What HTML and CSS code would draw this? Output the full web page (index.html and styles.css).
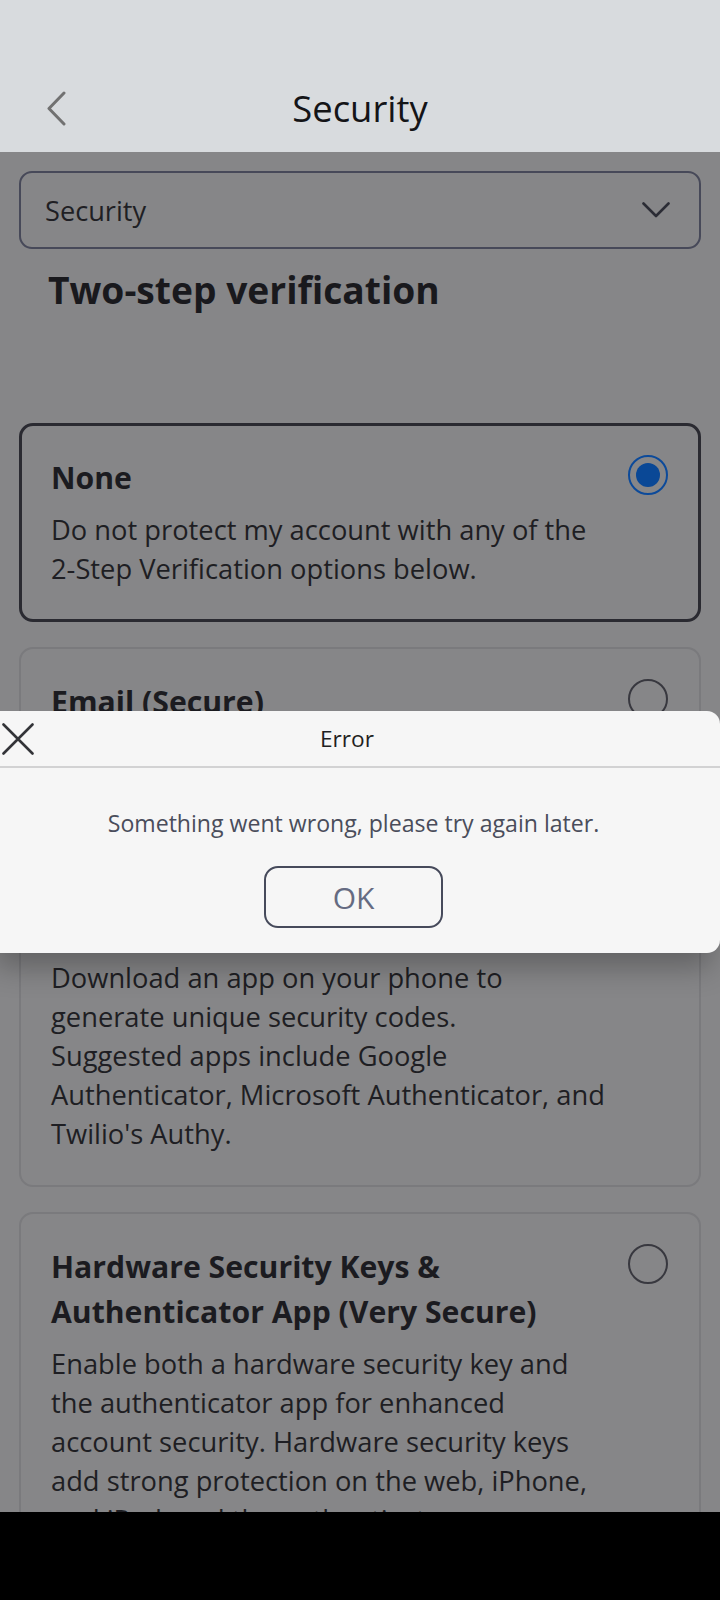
FILE: index.html
```
<!DOCTYPE html>
<html lang="en">
<head>
<meta charset="utf-8">
<title>Security</title>
<link rel="stylesheet" href="styles.css">
</head>
<body>
<div class="screen">
  <header class="topbar">
    <div class="topbar-row">
      <span class="back" aria-label="Back">
        <svg width="20" height="35" viewBox="0 0 20 35"><polyline points="18,2 3,17.5 18,33" fill="none" stroke="#717171" stroke-width="3" stroke-linecap="round" stroke-linejoin="round"/></svg>
      </span>
      <h1 class="title">Security</h1>
      <span></span>
    </div>
  </header>

  <main class="content">
    <div class="select">
      <span class="select-label">Security</span>
      <svg width="28" height="16" viewBox="0 0 28 16"><polyline points="1.5,1.5 14,14 26.5,1.5" fill="none" stroke="#2b2c35" stroke-width="2.6" stroke-linecap="round" stroke-linejoin="round"/></svg>
    </div>

    <h2 class="section-title">Two-step verification</h2>

    <div class="options">
      <div class="card selected">
        <div class="card-text">
          <div class="card-title">None</div>
          <p class="card-desc">Do not protect my account with any of the<br>2-Step Verification options below.</p>
        </div>
        <span class="radio on"></span>
      </div>

      <div class="card">
        <div class="card-text">
          <div class="card-title">Email (Secure)</div>
          <p class="card-desc">Receive a verification code by email<br>each time you sign in.</p>
        </div>
        <span class="radio"></span>
      </div>

      <div class="card">
        <div class="card-text">
          <div class="card-title">Authenticator App (Secure)</div>
          <p class="card-desc">Download an app on your phone to<br>generate unique security codes.<br>Suggested apps include Google<br>Authenticator, Microsoft Authenticator, and<br>Twilio's Authy.</p>
        </div>
        <span class="radio"></span>
      </div>

      <div class="card">
        <div class="card-text">
          <div class="card-title">Hardware Security Keys &amp;<br>Authenticator App (Very Secure)</div>
          <p class="card-desc">Enable both a hardware security key and<br>the authenticator app for enhanced<br>account security. Hardware security keys<br>add strong protection on the web, iPhone,<br>and iPad, and the authenticator app on<br>your Android devices.</p>
        </div>
        <span class="radio"></span>
      </div>
    </div>
  </main>

  <div class="navbar"></div>

  <div class="dialog" role="dialog">
    <div class="dialog-head">
      <span class="close" aria-label="Close">
        <svg width="32" height="32" viewBox="0 0 32 32"><path d="M1.5 1.5 L30.5 30.5 M30.5 1.5 L1.5 30.5" fill="none" stroke="#333438" stroke-width="2.6" stroke-linecap="round"/></svg>
      </span>
      <div class="dialog-title">Error</div>
    </div>
    <div class="dialog-body">
      <p class="dialog-msg">Something went wrong, please try again later.</p>
      <button class="ok-btn">OK</button>
    </div>
  </div>
</div>
</body>
</html>
```

FILE: styles.css
```
* { box-sizing: border-box; }

html, body {
  margin: 0;
  padding: 0;
  background: #000;
}

body {
  font-family: "Open Sans", "Noto Sans", "Liberation Sans", sans-serif;
  color: #1d1d22;
}

.screen {
  position: relative;
  width: 720px;
  height: 1600px;
  overflow: hidden;
  display: flex;
  flex-direction: column;
}

/* ---------- top bar ---------- */
.topbar {
  height: 152px;
  flex: none;
  background: #d8dbde;
  padding-top: 84px;
}

.topbar-row {
  height: 48px;
  display: grid;
  grid-template-columns: 1fr auto 1fr;
  align-items: center;
}

.back {
  display: flex;
  padding-left: 46px;
}

.title {
  margin: 0;
  font-size: 36.4px;
  font-weight: 400;
  line-height: 48px;
  color: #141417;
}

/* ---------- content ---------- */
.content {
  flex: 1;
  min-height: 0;
  overflow: hidden;
  background: #868688;
  padding: 19px 19px 0;
}

.select {
  height: 78px;
  border: 2px solid #474959;
  border-radius: 13px;
  display: flex;
  align-items: center;
  justify-content: space-between;
  padding: 0 29px 0 24px;
}

.select-label {
  font-size: 27.2px;
  color: #1f1f24;
}

.section-title {
  margin: 15px 0 0 29px;
  font-size: 37.2px;
  font-weight: 700;
  line-height: 51px;
  color: #19191d;
}

.options {
  margin-top: 108px;
  display: flex;
  flex-direction: column;
  gap: 25px;
}

.card {
  border: 2px solid #7a7a7d;
  border-radius: 14px;
  padding: 30px 31px 32px 30px;
  display: flex;
  align-items: flex-start;
  justify-content: space-between;
}

.card.selected {
  border: 3px solid #2a2a31;
  padding: 29px 30px 31px 29px;
}

.card-title {
  font-size: 30.2px;
  font-weight: 700;
  line-height: 45px;
  color: #1b1b20;
}

.card-desc {
  margin: 10px 0 0;
  font-size: 27.3px;
  line-height: 39px;
  color: #1e1e23;
  white-space: nowrap;
}

.radio {
  flex: none;
  width: 40px;
  height: 40px;
  border-radius: 50%;
  border: 2px solid #38383f;
  display: flex;
  align-items: center;
  justify-content: center;
}

.radio.on {
  border-color: #0c4a9a;
}

.radio.on::after {
  content: "";
  width: 24px;
  height: 24px;
  border-radius: 50%;
  background: #0a4896;
}

/* ---------- bottom nav bar ---------- */
.navbar {
  height: 88px;
  flex: none;
  background: #000;
}

/* ---------- dialog ---------- */
.dialog {
  position: absolute;
  top: 711px;
  left: -13px;
  width: 733px;
  height: 242px;
  background: #f6f6f6;
  border-radius: 13px;
  box-shadow: 0 22px 30px -8px rgba(0, 0, 0, 0.28);
}

.dialog-head {
  height: 57px;
  border-bottom: 2px solid #d2d2d3;
  display: flex;
  align-items: center;
  position: relative;
}

.close {
  display: flex;
  padding-left: 15px;
}

.dialog-title {
  position: absolute;
  left: 0;
  right: 13px;
  text-align: center;
  font-size: 22.7px;
  color: #1f1f22;
}

.dialog-body {
  display: flex;
  flex-direction: column;
  align-items: center;
  padding-top: 40px;
}

.dialog-msg {
  margin: 0;
  font-size: 23.1px;
  line-height: 31px;
  color: #4a4d5b;
}

.ok-btn {
  margin-top: 27px;
  width: 179px;
  height: 62px;
  border: 2px solid #464a5b;
  border-radius: 14px;
  background: transparent;
  font-family: inherit;
  font-size: 30px;
  color: #656b82;
  padding: 0;
}
```
